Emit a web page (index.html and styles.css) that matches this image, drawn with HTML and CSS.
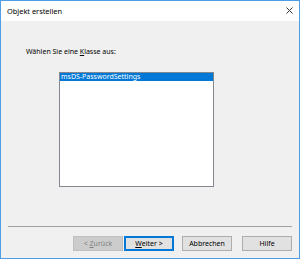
FILE: index.html
```html
<!DOCTYPE html>
<html lang="de">
<head>
<meta charset="utf-8">
<title>Objekt erstellen</title>
<link rel="stylesheet" href="styles.css">
</head>
<body>
<div class="window">
  <div class="titlebar">
    <span class="title">Objekt erstellen</span>
    <svg class="close" width="7" height="7" viewBox="0 0 7 7"><path d="M0.5 0.5L6.5 6.5M6.5 0.5L0.5 6.5" stroke="#333" stroke-width="1"/></svg>
  </div>
  <div class="content">
    <div class="label">Wählen Sie eine <u>K</u>lasse aus:</div>
    <div class="listbox">
      <div class="item selected">msDS-PasswordSettings</div>
    </div>
    <div class="separator"></div>
    <div class="buttons">
      <div class="btn disabled">&lt;&nbsp;<u>Z</u>urück</div>
      <div class="btn default btn-next"><u>W</u>eiter&nbsp;&gt;</div>
      <div class="btn btn-cancel">Abbrechen</div>
      <div class="btn btn-help">Hilfe</div>
    </div>
  </div>
</div>
</body>
</html>
```

FILE: styles.css
```css
html, body {
  margin: 0;
  padding: 0;
}
body {
  font-family: "Noto Sans", "Liberation Sans", sans-serif;
  font-size: 7px;
  color: #000;
}
.window {
  width: 300px;
  height: 259px;
  box-sizing: border-box;
  border: 1px solid #4f9de6;
  display: flex;
  flex-direction: column;
  background: #f0f0f0;
}
.titlebar {
  height: 20px;
  background: #fff;
  display: flex;
  align-items: center;
  justify-content: space-between;
  padding: 0 6px 0 6px;
  flex: none;
}
.title {
  font-size: 7.4px;
  color: #000;
}
.close {
  display: block;
  margin-top: -1px;
}
.content {
  flex: 1;
  display: flex;
  flex-direction: column;
  padding-top: 26px;
}
.label {
  margin-left: 25px;
  height: 10px;
  line-height: 10px;
}
.listbox {
  margin-left: 58px;
  margin-top: 15px;
  width: 155px;
  height: 115px;
  box-sizing: border-box;
  border: 1px solid #828790;
  background: #fff;
}
.item {
  height: 8px;
  line-height: 8px;
  padding-left: 1px;
  white-space: nowrap;
}
.selected {
  background: #0078d7;
  color: #fff;
}
.separator {
  margin: 39px 7px 0 7px;
  height: 1px;
  background: #a0a0a0;
}
.buttons {
  display: flex;
  justify-content: flex-end;
  margin-top: 9px;
  margin-right: 7px;
}
.btn {
  width: 50px;
  height: 15px;
  box-sizing: border-box;
  border: 1px solid #adadad;
  background: #e1e1e1;
  display: flex;
  align-items: center;
  justify-content: center;
}
.disabled {
  background: #cccccc;
  border-color: #bfbfbf;
  color: #838383;
}
.default {
  border: 1px solid #0078d7;
  box-shadow: inset 0 0 0 1px #0078d7;
}
.btn-next {
  margin-left: 1px;
}
.btn-cancel {
  margin-left: 8px;
}
.btn-help {
  margin-left: 10px;
}
u {
  text-decoration-thickness: 1px;
  text-underline-offset: 1px;
}
```
